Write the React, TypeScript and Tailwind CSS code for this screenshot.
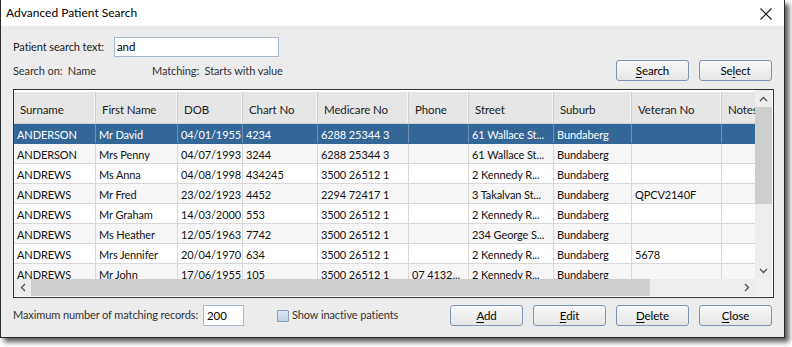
import React from "react";

const cols = [
  { name: "Surname", w: 82 },
  { name: "First Name", w: 82 },
  { name: "DOB", w: 65 },
  { name: "Chart No", w: 75 },
  { name: "Medicare No", w: 91 },
  { name: "Phone", w: 60 },
  { name: "Street", w: 85 },
  { name: "Suburb", w: 78 },
  { name: "Veteran No", w: 90 },
  { name: "Notes", w: 60 },
];

const rows: string[][] = [
  ["ANDERSON", "Mr David", "04/01/1955", "4234", "6288 25344 3", "", "61 Wallace St...", "Bundaberg", "", ""],
  ["ANDERSON", "Mrs Penny", "04/07/1993", "3244", "6288 25344 3", "", "61 Wallace St...", "Bundaberg", "", ""],
  ["ANDREWS", "Ms Anna", "04/08/1998", "434245", "3500 26512 1", "", "2 Kennedy R...", "Bundaberg", "", ""],
  ["ANDREWS", "Mr Fred", "23/02/1923", "4452", "2294 72417 1", "", "3 Takalvan St...", "Bundaberg", "QPCV2140F", ""],
  ["ANDREWS", "Mr Graham", "14/03/2000", "553", "3500 26512 1", "", "2 Kennedy R...", "Bundaberg", "", ""],
  ["ANDREWS", "Ms Heather", "12/05/1963", "7742", "3500 26512 1", "", "234 George S...", "Bundaberg", "", ""],
  ["ANDREWS", "Mrs Jennifer", "20/04/1970", "634", "3500 26512 1", "", "2 Kennedy R...", "Bundaberg", "5678", ""],
  ["ANDREWS", "Mr John", "17/06/1955", "105", "3500 26512 1", "07 4132...", "2 Kennedy R...", "Bundaberg", "", ""],
];

function Btn({ pre, u, post }: { pre: string; u: string; post: string }) {
  return (
    <button className="w-[73px] h-[21px] rounded-[3px] border border-[#7d95b5] bg-gradient-to-b from-[#f8f8f8] to-[#e6e6e6] text-[11.5px] text-black leading-none flex items-center justify-center whitespace-nowrap">
      <span>
        {pre}
        <span className="underline underline-offset-2">{u}</span>
        {post}
      </span>
    </button>
  );
}

export default function App() {
  return (
    <div
      className="w-[792px] h-[347px] bg-white overflow-hidden"
      style={{ fontFamily: '"Segoe UI", Lato, sans-serif' }}
    >
      <div className="w-[785px] h-[338px] border-l border-r border-b border-[#2a2a2a] bg-[#ececec] flex flex-col shadow-[4px_4px_5px_rgba(0,0,0,0.65)]">
        {/* Title bar */}
        <div className="h-[26px] bg-white flex items-center justify-between pl-[5px] pr-[12px] shrink-0">
          <span className="text-[12px] text-black whitespace-nowrap">Advanced Patient Search</span>
          <svg width="12" height="12" viewBox="0 0 12 12" className="mt-[1px]">
            <path d="M0.5 0.5 L11.5 11.5 M11.5 0.5 L0.5 11.5" stroke="#111" strokeWidth="1.1" fill="none" />
          </svg>
        </div>

        <div className="flex flex-col pl-[12px] pr-[10px] pt-[11px] text-[11px] tracking-[-0.1px] text-[#1a1a1a]">
          {/* Row 1 */}
          <div className="flex items-center h-[20px]">
            <span className="w-[101px] whitespace-nowrap">Patient search text:</span>
            <div className="w-[165px] h-[20px] bg-white border border-[#a9b8d2] flex items-center pl-[2px] text-black text-[11.5px]">and</div>
          </div>

          {/* Row 2 */}
          <div className="flex items-center h-[21px] mt-[3px]">
            <span className="w-[139px] text-[#333] pt-[2px] whitespace-nowrap">Search on:&nbsp; Name</span>
            <span className="text-[#333] pt-[2px] whitespace-nowrap">Matching:&nbsp; Starts with value</span>
            <div className="ml-auto flex gap-[10px] mr-[2px]">
              <Btn pre="" u="S" post="earch" />
              <Btn pre="Se" u="l" post="ect" />
            </div>
          </div>

          {/* Table */}
          <div className="mt-[8px] w-[761px] h-[209px] border border-[#333] bg-white grid grid-cols-[741px_17px] grid-rows-[189px_17px] gap-0">
            <div className="overflow-hidden relative">
              <div className="flex h-[34px] bg-[#e6e6e6] border-t-2 border-white border-b border-b-[#d0d0d0]">
                {cols.map((c) => (
                  <div
                    key={c.name}
                    style={{ width: c.w }}
                    className="shrink-0 border-r border-[#cfcfcf] shadow-[inset_-1px_0_0_#f4f4f4] flex items-center pl-[6px] pt-[4px] whitespace-nowrap overflow-hidden text-[#222] text-[11.5px]"
                  >
                    {c.name}
                  </div>
                ))}
              </div>
              {rows.map((r, i) => {
                const sel = i === 0;
                const bg = sel ? "bg-[#336798] text-white" : i % 2 === 1 ? "bg-[#f6f6f6] text-[#111]" : "bg-white text-[#111]";
                return (
                  <div key={i} className={`flex h-[20px] border-b ${sel ? "border-[#336798]" : "border-[#d8d8d8]"} ${bg}`}>
                    {cols.map((c, j) => (
                      <div
                        key={j}
                        style={{ width: c.w }}
                        className={`shrink-0 border-r ${sel ? "border-[#6f8fb2]" : "border-[#d8d8d8]"} flex items-center pl-[3px] pt-[3px] whitespace-nowrap overflow-hidden`}
                      >
                        {r[j]}
                      </div>
                    ))}
                  </div>
                );
              })}
            </div>

            {/* Vertical scrollbar */}
            <div className="bg-[#ededed] flex flex-col items-center">
              <div className="h-[17px] flex items-center justify-center">
                <svg width="9" height="6" viewBox="0 0 9 6">
                  <path d="M1 5 L4.5 1.5 L8 5" stroke="#555" strokeWidth="1.4" fill="none" />
                </svg>
              </div>
              <div className="w-[17px] h-[97px] bg-[#cdcdcd]" />
              <div className="flex-1" />
              <div className="h-[17px] flex items-center justify-center">
                <svg width="9" height="6" viewBox="0 0 9 6">
                  <path d="M1 1 L4.5 4.5 L8 1" stroke="#555" strokeWidth="1.4" fill="none" />
                </svg>
              </div>
            </div>

            {/* Horizontal scrollbar */}
            <div className="bg-[#ededed] flex items-center">
              <div className="w-[17px] h-[17px] flex items-center justify-center">
                <svg width="6" height="9" viewBox="0 0 6 9">
                  <path d="M5 1 L1.5 4.5 L5 8" stroke="#555" strokeWidth="1.4" fill="none" />
                </svg>
              </div>
              <div className="w-[619px] h-[17px] bg-[#cdcdcd]" />
              <div className="flex-1" />
              <div className="w-[17px] h-[17px] flex items-center justify-center">
                <svg width="6" height="9" viewBox="0 0 6 9">
                  <path d="M1 1 L4.5 4.5 L1 8" stroke="#555" strokeWidth="1.4" fill="none" />
                </svg>
              </div>
            </div>
            <div className="bg-[#f0f0f0]" />
          </div>

          {/* Bottom row */}
          <div className="flex items-center h-[21px] mt-[7px]">
            <span className="w-[190px] text-[#333] whitespace-nowrap">Maximum number of matching records:</span>
            <div className="w-[41px] h-[21px] bg-white border border-[#a9b8d2] flex items-center pl-[3px] text-black text-[11.5px]">200</div>
            <div className="ml-[33px] flex items-center">
              <div className="w-[12px] h-[12px] border border-[#8a9bb5] bg-gradient-to-b from-[#dde7f3] to-[#bfd2ea] rounded-[1px]" />
              <span className="ml-[3px] text-[#333] whitespace-nowrap">Show inactive patients</span>
            </div>
            <div className="ml-auto flex gap-[10px] mr-[2px]">
              <Btn pre="" u="A" post="dd" />
              <Btn pre="" u="E" post="dit" />
              <Btn pre="" u="D" post="elete" />
              <Btn pre="" u="C" post="lose" />
            </div>
          </div>
        </div>
      </div>
    </div>
  );
}
